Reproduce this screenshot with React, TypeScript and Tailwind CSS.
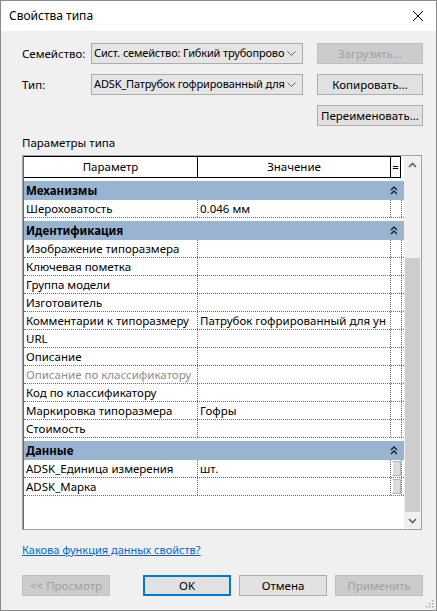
import React from "react";

type Row = { name: string; value?: string; muted?: boolean; eq?: boolean };
type Group = { title: string; rows: Row[] };

const groups: Group[] = [
  { title: "Механизмы", rows: [{ name: "Шероховатость", value: "0.046 мм" }] },
  {
    title: "Идентификация",
    rows: [
      { name: "Изображение типоразмера" },
      { name: "Ключевая пометка" },
      { name: "Группа модели" },
      { name: "Изготовитель" },
      { name: "Комментарии к типоразмеру", value: "Патрубок гофрированный для ун" },
      { name: "URL" },
      { name: "Описание" },
      { name: "Описание по классификатору", muted: true },
      { name: "Код по классификатору" },
      { name: "Маркировка типоразмера", value: "Гофры" },
      { name: "Стоимость" },
    ],
  },
  {
    title: "Данные",
    rows: [
      { name: "ADSK_Единица измерения", value: "шт.", eq: true },
      { name: "ADSK_Марка", eq: true },
    ],
  },
];

const ChevronDown = () => (
  <svg width="9" height="5" viewBox="0 0 9 5" className="shrink-0">
    <path d="M0.5 0.5 L4.5 4.5 L8.5 0.5" fill="none" stroke="#606060" strokeWidth="1" />
  </svg>
);

const DoubleUp = () => (
  <svg width="8" height="9" viewBox="0 0 8 9">
    <path d="M1 4 L4 1 L7 4 M1 8 L4 5 L7 8" fill="none" stroke="#1c2233" strokeWidth="1.4" />
  </svg>
);

const Combo = ({ text }: { text: string }) => (
  <div className="w-[212px] h-[21px] bg-[#e5e5e5] border border-[#acacac] flex items-center pl-[2px] pr-[6px]">
    <span className="flex-1 whitespace-nowrap text-[11px] tracking-[-0.15px]">{text}</span>
    <ChevronDown />
  </div>
);

const Btn = ({ label, disabled, focused, className = "" }: { label: string; disabled?: boolean; focused?: boolean; className?: string }) => (
  <div
    className={
      "w-[88px] h-[21px] flex items-center justify-center " +
      (disabled
        ? "bg-[#cccccc] border border-[#bfbfbf] text-[#a0a0a0] "
        : focused
        ? "bg-[#e1e1e1] border-2 border-[#0078d7] "
        : "bg-[#e1e1e1] border border-[#adadad] ") +
      className
    }
  >
    {label}
  </div>
);

const DataRow = ({ row }: { row: Row }) => (
  <div className="flex h-[18px] border-b border-dotted border-[#6e6e6e]">
    <div className={"w-[174px] shrink-0 border-r border-dotted border-[#6e6e6e] pl-[2px] leading-[17px] whitespace-nowrap overflow-hidden " + (row.muted ? "text-[#8d8d8d]" : "")}>
      {row.name}
    </div>
    <div className="w-[193px] shrink-0 border-r border-dotted border-[#6e6e6e] pl-[2px] leading-[17px] whitespace-nowrap overflow-hidden">
      {row.value}
    </div>
    <div className="w-[11px] shrink-0 border-r border-dotted border-[#6e6e6e] flex items-center justify-center">
      {row.eq && <div className="w-[9px] h-[15px] bg-[#dcdcdc] border border-[#b4b4b4] border-l-white" />}
    </div>
  </div>
);

export default function App() {
  return (
    <div className="relative w-[437px] h-[611px] border border-[#8a8a8a] bg-[#f0f0f0] flex flex-col font-['Noto_Sans',sans-serif] text-[11.5px] text-black">
      {/* title bar */}
      <div className="h-[30px] bg-white flex items-center justify-between pl-[8px] pr-[12px]">
        <span className="text-[12px]">Свойства типа</span>
        <svg width="12" height="12" viewBox="0 0 12 12">
          <path d="M1 1 L11 11 M11 1 L1 11" stroke="#000" strokeWidth="1" />
        </svg>
      </div>

      {/* body */}
      <div className="pl-[21px] pt-[12px] flex flex-col">
        <div className="flex items-center h-[21px]">
          <div className="w-[69px]">Семейство:</div>
          <Combo text="Сист. семейство: Гибкий трубопрово" />
          <div className="ml-[14px] w-[106px] h-[21px] bg-[#cccccc] border border-[#bfbfbf] text-[#a0a0a0] flex items-center justify-center">
            Загрузить...
          </div>
        </div>
        <div className="flex items-center h-[21px] mt-[10px]">
          <div className="w-[69px]">Тип:</div>
          <Combo text="ADSK_Патрубок гофрированный для" />
          <div className="ml-[14px] w-[106px] h-[21px] bg-[#e1e1e1] border border-[#adadad] flex items-center justify-center">
            Копировать...
          </div>
        </div>
        <div className="flex justify-end h-[21px] mt-[10px] pr-[13px]">
          <div className="w-[106px] h-[21px] bg-[#e1e1e1] border border-[#adadad] flex items-center justify-center">
            Переименовать...
          </div>
        </div>

        <div className="mt-[9px] leading-[16px]">Параметры типа</div>

        {/* property grid */}
        <div className="mt-[4px] w-[400px] h-[375px] border border-[#a0a0a0]">
          <div className="flex h-full border-l border-[#696969]">
            <div className="w-[380px] bg-white flex flex-col overflow-hidden">
              <div className="flex h-[22px] w-[377px] border-y border-r border-black">
                <div className="w-[174px] border-r border-black flex items-center justify-center">Параметр</div>
                <div className="w-[193px] border-r border-black flex items-center justify-center">Значение</div>
                <div className="flex-1 flex items-center justify-center leading-none">=</div>
              </div>
              {groups.map((g) => (
                <div key={g.title} className="flex flex-col">
                  <div className="mt-[3px] h-[19px] bg-[#99b4d1] flex items-center justify-between pl-[2px] pr-[6px]">
                    <span className="font-bold">{g.title}</span>
                    <DoubleUp />
                  </div>
                  {g.rows.map((r) => (
                    <DataRow key={r.name} row={r} />
                  ))}
                </div>
              ))}
            </div>
            {/* scrollbar */}
            <div className="w-[17px] bg-[#f0f0f0] flex flex-col">
              <div className="h-[17px] flex items-center justify-center">
                <svg width="9" height="6" viewBox="0 0 9 6">
                  <path d="M1 5 L4.5 1.5 L8 5" fill="none" stroke="#606060" strokeWidth="1.6" />
                </svg>
              </div>
              <div className="h-[85px]" />
              <div className="h-[254px] px-[1px]">
                <div className="h-full bg-[#cdcdcd]" />
              </div>
              <div className="h-[17px] flex items-center justify-center">
                <svg width="9" height="6" viewBox="0 0 9 6">
                  <path d="M1 1 L4.5 4.5 L8 1" fill="none" stroke="#606060" strokeWidth="1.6" />
                </svg>
              </div>
            </div>
          </div>
        </div>

        <div className="mt-[12px] leading-[16px]">
          <span className="text-[11px] text-[#0066cc] underline">Какова функция данных свойств?</span>
        </div>

        <div className="flex mt-[17px]">
          <Btn label="<< Просмотр" disabled />
          <Btn label="OK" focused className="ml-[33px]" />
          <Btn label="Отмена" className="ml-[8px]" />
          <Btn label="Применить" disabled className="ml-[8px]" />
        </div>
      </div>

      {/* size grip */}
      <svg width="8" height="8" viewBox="0 0 8 8" className="absolute right-[2px] bottom-[2px]">
        <rect x="6" y="0" width="1.5" height="1.5" fill="#a8a8a8" />
        <rect x="3" y="3" width="1.5" height="1.5" fill="#a8a8a8" />
        <rect x="6" y="3" width="1.5" height="1.5" fill="#a8a8a8" />
        <rect x="0" y="6" width="1.5" height="1.5" fill="#a8a8a8" />
        <rect x="3" y="6" width="1.5" height="1.5" fill="#a8a8a8" />
        <rect x="6" y="6" width="1.5" height="1.5" fill="#a8a8a8" />
      </svg>
    </div>
  );
}
